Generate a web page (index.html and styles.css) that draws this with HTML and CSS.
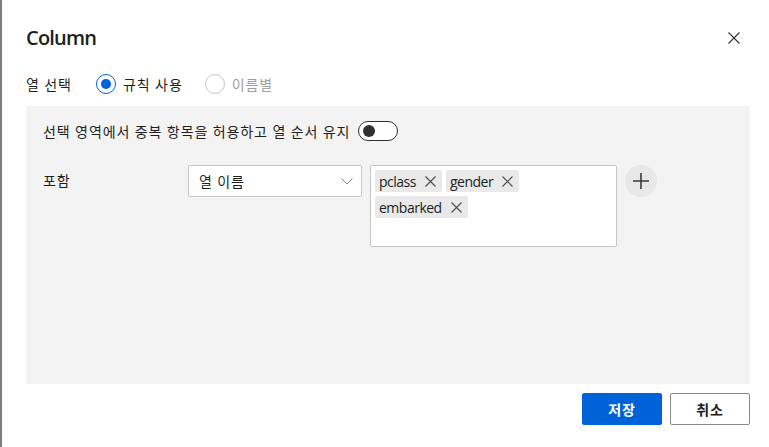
FILE: index.html
```html
<!DOCTYPE html>
<html lang="ko">
<head>
<meta charset="utf-8">
<title>Column</title>
<link rel="stylesheet" href="styles.css">
</head>
<body>
<div class="page">
  <div class="dialog">
    <div class="header">
      <h1 class="title">Column</h1>
      <button class="close" aria-label="닫기">
        <svg width="12" height="12" viewBox="0 0 12 12"><path d="M0.5 0.5 L11.5 11.5 M11.5 0.5 L0.5 11.5" stroke="#323130" stroke-width="1.1" fill="none"/></svg>
      </button>
    </div>
    <div class="select-row">
      <span class="label ko">열 선택</span>
      <label class="radio checked"><span class="circle"><span class="dot"></span></span><span class="ko">규칙 사용</span></label>
      <label class="radio disabled"><span class="circle"></span><span class="ko">이름별</span></label>
    </div>
    <div class="panel">
      <div class="toggle-row">
        <span class="ko">선택 영역에서 중복 항목을 허용하고 열 순서 유지</span>
        <span class="toggle"><span class="knob"></span></span>
      </div>
      <div class="include-row">
        <span class="include-label ko">포함</span>
        <div class="dropdown">
          <span class="ko">열 이름</span>
          <svg width="12" height="7" viewBox="0 0 12 7"><path d="M0.5 0.5 L6 6 L11.5 0.5" stroke="#8a8886" stroke-width="1" fill="none"/></svg>
        </div>
        <div class="tagbox">
          <span class="tag">pclass<svg width="11" height="11" viewBox="0 0 11 11"><path d="M0.5 0.5 L10.5 10.5 M10.5 0.5 L0.5 10.5" stroke="#505050" stroke-width="1.2" fill="none"/></svg></span>
          <span class="tag">gender<svg width="11" height="11" viewBox="0 0 11 11"><path d="M0.5 0.5 L10.5 10.5 M10.5 0.5 L0.5 10.5" stroke="#505050" stroke-width="1.2" fill="none"/></svg></span>
          <span class="tag">embarked<svg width="11" height="11" viewBox="0 0 11 11"><path d="M0.5 0.5 L10.5 10.5 M10.5 0.5 L0.5 10.5" stroke="#505050" stroke-width="1.2" fill="none"/></svg></span>
        </div>
        <button class="add" aria-label="추가">
          <svg width="16" height="16" viewBox="0 0 16 16"><path d="M0 8 H16 M8 0 V16" stroke="#3b3a39" stroke-width="1.6" fill="none"/></svg>
        </button>
      </div>
    </div>
    <div class="footer">
      <button class="btn primary"><span class="ko">저장</span></button>
      <button class="btn secondary"><span class="ko">취소</span></button>
    </div>
  </div>
</div>
</body>
</html>
```
FILE: styles.css
```css
* { box-sizing: border-box; }
html, body { margin: 0; padding: 0; background: #fff; }
body {
  font-family: "Open Sans", "Noto Sans CJK KR", sans-serif;
  font-size: 14px;
  color: #201f1e;
}
.ko { letter-spacing: 0.9px; }
.page {
  height: 447px;
  border-left: 2px solid #7c7c7c;
}
.dialog {
  width: 748px;
  padding: 24px 0 0 24px;
}
.header {
  display: flex;
  align-items: center;
  justify-content: space-between;
  height: 28px;
}
.title {
  margin: 0;
  font-size: 20px;
  font-weight: 600;
  line-height: 28px;
  letter-spacing: -0.8px;
}
.close {
  border: 0;
  background: none;
  padding: 0;
  width: 12px;
  height: 12px;
  margin-right: 10px;
  display: flex;
}
.select-row {
  display: flex;
  align-items: center;
  height: 20px;
  margin-top: 22px;
}
.label { width: 70px; }
.radio {
  display: flex;
  align-items: center;
  gap: 7px;
  margin-right: 22px;
}
.circle {
  width: 20px;
  height: 20px;
  border-radius: 50%;
  border: 1px solid #0063d8;
  display: flex;
  align-items: center;
  justify-content: center;
}
.dot {
  width: 10px;
  height: 10px;
  border-radius: 50%;
  background: #0063d8;
}
.radio.disabled .circle { border-color: #c8c6c4; }
.radio.disabled { color: #a19f9d; }
.panel {
  margin-top: 12px;
  background: #f3f3f3;
  height: 278px;
  padding: 15px 17px;
}
.toggle-row {
  display: flex;
  align-items: center;
  gap: 8px;
  height: 20px;
}
.toggle {
  width: 40px;
  height: 20px;
  border: 1px solid #323130;
  border-radius: 10px;
  background: #fff;
  display: flex;
  align-items: center;
  padding-left: 4px;
}
.knob {
  width: 12px;
  height: 12px;
  border-radius: 50%;
  background: #323130;
}
.include-row {
  display: flex;
  align-items: flex-start;
  margin-top: 24px;
}
.include-label {
  width: 145px;
  line-height: 32px;
}
.dropdown {
  width: 174px;
  height: 32px;
  background: #fff;
  border: 1px solid #c8c6c4;
  border-radius: 2px;
  display: flex;
  align-items: center;
  justify-content: space-between;
  padding: 0 8px 0 10px;
}
.tagbox {
  margin-left: 8px;
  width: 247px;
  height: 82px;
  background: #fff;
  border: 1px solid #c8c6c4;
  border-radius: 2px;
  padding: 4px;
  display: flex;
  flex-wrap: wrap;
  align-content: flex-start;
  gap: 4px;
}
.tag {
  display: flex;
  align-items: center;
  gap: 9px;
  height: 22px;
  background: #e9e9e9;
  border-radius: 2px;
  padding: 0 6px 0 4px;
  color: #201f1e;
  letter-spacing: -0.5px;
}
.add {
  margin-left: 8px;
  width: 32px;
  height: 32px;
  border-radius: 50%;
  border: 0;
  background: #e8e8e8;
  display: flex;
  align-items: center;
  justify-content: center;
  padding: 0;
}
.footer {
  display: flex;
  justify-content: flex-end;
  gap: 8px;
  margin-top: 9px;
}
.btn {
  width: 80px;
  height: 32px;
  border-radius: 2px;
  font-family: "Open Sans", "Noto Sans CJK KR", sans-serif;
  font-size: 14px;
  font-weight: 600;
  padding: 0;
}
.primary {
  background: #0062d9;
  color: #fff;
  border: 1px solid #0062d9;
}
.secondary {
  background: #fff;
  color: #201f1e;
  border: 1px solid #8a8886;
}
```
